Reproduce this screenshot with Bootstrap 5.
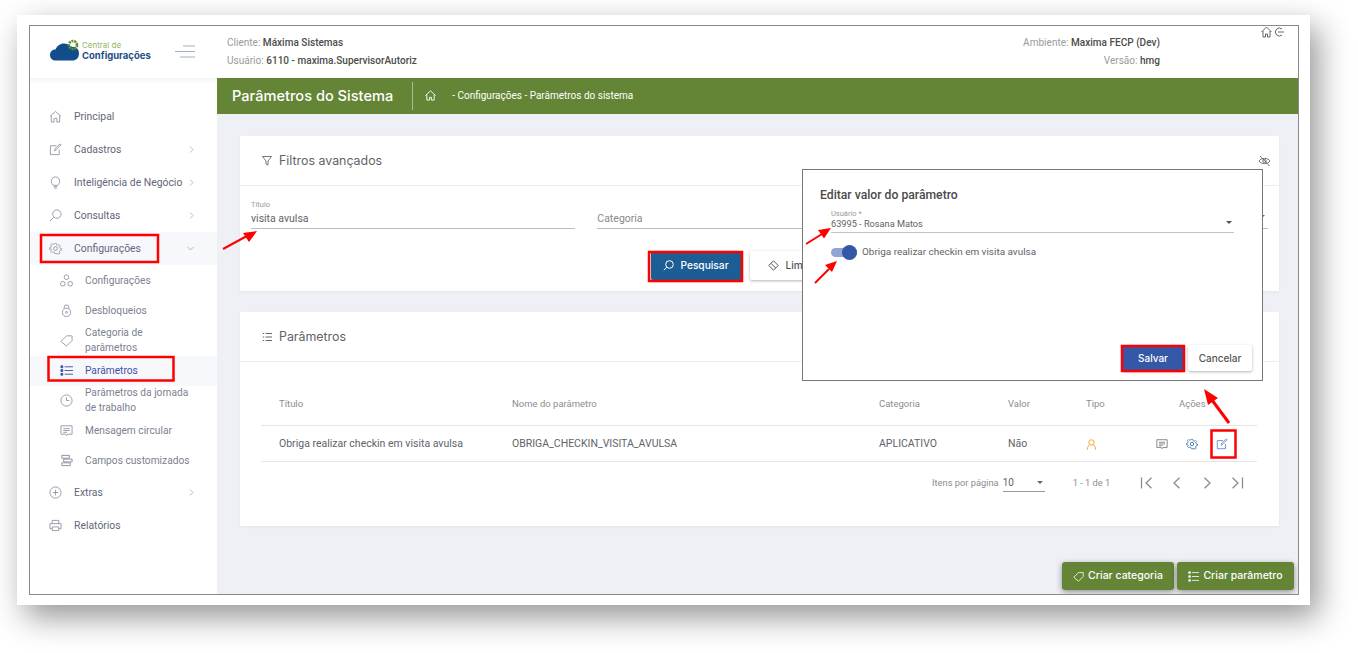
<!DOCTYPE html>
<html lang="pt-BR"><head><meta charset="utf-8"><title>Parâmetros do Sistema</title>
<link href="https://cdn.jsdelivr.net/npm/bootstrap@5.3.0/dist/css/bootstrap.min.css" rel="stylesheet">
<style>
html,body{height:653px;overflow:hidden;background:#fff}
body{font-family:"Inter","Noto Sans",sans-serif;color:#5f6368;font-size:11px}
.sheet{position:relative;width:1293px;height:590px;margin:15px 0 0 17px;padding:10px 12px;background:#fff;box-shadow:8px 12px 30px rgba(0,0,0,.42)}
.frame{position:relative;width:1270px;height:570px;border:1px solid #8a8a8a;background:#fff;overflow:hidden}
.topbar{height:52px}
.brandbox{width:187px;padding-left:20px;padding-top:12px}
.brand-a{font-size:8px;line-height:9px;color:#8fb56a;margin-top:3px}
.brand-b{font-size:9.5px;line-height:12px;font-weight:700;color:#1e4f86}
.brand-txt{margin-left:2px}
.burger{margin-left:24px;margin-top:7px}
.infobox{padding-left:10px;font-family:"Roboto",sans-serif;font-size:10.05px;line-height:18px;padding-top:8px;color:#9a9a9a}
.infobox b{color:#4c4c4c;font-weight:500}
.infoend{margin-left:auto;margin-right:138px;text-align:right;font-family:"Roboto",sans-serif;font-size:10.05px;line-height:18px;padding-top:8px;color:#9a9a9a}
.infoend b{color:#4c4c4c;font-weight:500}
.topicons{position:absolute;right:13px;top:0}
.bodyrow{height:517px}
.sidebar{width:187px;padding-top:22px;background:#fff;box-shadow:inset 0 7px 6px -5px rgba(0,0,0,.06);flex:none;font-family:"Roboto",sans-serif}
.mi{height:33px;padding-left:19px;padding-right:23px;display:flex;align-items:center;color:#63667a;font-size:10.4px}
.mi svg.ico{width:13px;height:13px;flex:none;margin-right:12px}
.mi .chev{margin-left:auto}
.mi.open{background:#f7f8fb;margin-bottom:1px}
.si{height:30px;padding-left:30px;display:flex;align-items:center;color:#7d8090;font-size:10.2px;line-height:14.5px}
.si svg.ico{width:13px;height:13px;flex:none;margin-right:12px}
.si.on{background:#f7f8fb;color:#3f51a5}
.mainarea{background:#eef0f6}
.greenbar{height:36px;background:#648535;color:#fff;padding-left:15px}
.greenbar .ttl{font-size:14.6px;font-weight:500;padding-right:19px;line-height:28px;border-right:1px solid #a8bd8a}
.greenbar .homeic{margin-left:12px}
.greenbar .crumb{font-family:"Roboto",sans-serif;font-size:10px;margin-left:16px}
.pagepad{padding:22px 19px 0 23px}
.panel{background:#fff;box-shadow:0 1px 3px rgba(0,0,0,.05)}
.panel-a{height:155px;margin-bottom:21px}
.panel-b{height:214px}
.panelhead{height:50px;border-bottom:1px solid #eeeeee;padding-left:22px;padding-top:1px;font-size:12.4px;color:#5f6368}
.hic{margin-right:7px}
.fieldrow{padding:13px 11px 0 11px;gap:22px}
.fld{flex:1 1 0;height:30px;border-bottom:1px solid #bdbdbd;position:relative;padding-top:12px;font-family:"Roboto",sans-serif;font-size:10.5px;color:#5f6368}
.fld .cap{position:absolute;left:0;top:0;font-size:7.5px;color:#9a9a9a}
.fld.ph{color:#8a8a8a}
.fld .caret{position:absolute;right:3px;top:16px}
.actions{gap:8px;margin-top:22px}
.bt{height:29px;border:0;border-radius:2px;font-size:10.2px;font-weight:500;display:inline-flex;align-items:center;justify-content:center;gap:6px;box-shadow:0 1px 3px rgba(0,0,0,.3)}
.bt-blue{width:91px;background:#1c5e93;color:#fff}
.bt-white{width:119px;background:#fff;color:#555;padding-right:6px}
.tablewrap{padding:25px 22px 0 21px}
table.ptab{table-layout:fixed;width:996px;margin:0;font-family:"Roboto",sans-serif;font-size:10.5px;color:#5f6368}
table.ptab th{height:39px;font-weight:400;font-size:9.5px;color:#8d8d8d;padding:0 0 5px 18px;vertical-align:middle;border-bottom:1px solid #e6e6e6}
table.ptab td{height:36px;padding:0 0 0 18px;vertical-align:middle;border-bottom:1px solid #e6e6e6;color:#5f6368}
.acts{gap:18px;margin-left:-23px}
.pager{height:42px;font-family:"Roboto",sans-serif;font-size:9.3px;color:#8d8d8d;padding-left:692px;position:relative}
.pagesel{width:42px;border-bottom:1px solid #9a9a9a;margin-left:4px;height:17px;color:#5f6368;font-size:10px;display:flex;justify-content:space-between;align-items:center;padding-right:2px}
.caret{width:0;height:0;border-left:3.5px solid transparent;border-right:3.5px solid transparent;border-top:3.5px solid #666}
.range{margin-left:28px;margin-right:30px}
.pgicons{gap:16px}
.fabs{position:absolute;right:4px;bottom:4px;gap:3px}
.fab{height:28px;border:0;border-radius:3px;background:#648535;color:#fff;font-size:10.5px;font-weight:500;display:inline-flex;align-items:center;justify-content:center;gap:4px;padding-top:1px;box-shadow:0 2px 6px rgba(0,0,0,.4)}
.dlg{position:absolute;left:772px;top:143px;width:461px;height:212px;background:#fff;border:1px solid #777;padding:17px 17px}
.dlgtitle{font-family:"Roboto",sans-serif;font-size:12.2px;font-weight:500;color:#4a4a4a;line-height:16px}
.dlgfld{position:relative;margin:6px 11px 0 11px;height:24px;border-bottom:1px solid #c4c4c4;font-family:"Roboto",sans-serif;font-size:9.2px;color:#5f6368;padding-top:8px}
.dlgfld .cap{position:absolute;left:0;top:-1px;font-size:7.5px;color:#9a9a9a}
.dlgfld .caret{position:absolute;right:2px;top:12px;border-top-color:#555}
.sw{margin:12px 0 0 11px;gap:5px;font-family:"Roboto",sans-serif;font-size:9.95px;color:#5f6368}
.swtrack{position:relative;width:26px;height:9px;border-radius:5px;background:#92a4d4}
.swknob{position:absolute;right:0;top:-3px;width:15px;height:15px;border-radius:50%;background:#3557a7}
.dlgbtns{position:absolute;right:10px;bottom:9px;gap:5px}
.bts{height:26px;border:0;border-radius:2px;font-size:10px;font-weight:500;display:inline-flex;align-items:center;justify-content:center;box-shadow:0 1px 3px rgba(0,0,0,.3)}
.bts-blue{width:60px;background:#3557a7;color:#fff}
.bts-white{width:64px;background:#fff;color:#555}
.marks{position:absolute;left:0;top:0;width:1358px;height:653px;pointer-events:none}
.pageoverlay{position:fixed;left:0;top:0}
</style></head><body>
<div class="sheet">
<div class="frame d-flex flex-column">
  <div class="topbar d-flex flex-none">
    <div class="brandbox d-flex align-items-start">
      <svg width="30" height="24" viewBox="0 0 30 24"><path d="M6 22.500c-3.500 0-6-2-6-5.500s2.500-5.500 5.500-5.500C7 8 10 5.500 14 5.500c3 0 5 1 6 3 4-1 9 1 9 7 0 4.500-3 7-6.500 7z" fill="#124d8b"/><circle cx="23" cy="7" r="4" fill="none" stroke="#5f8f2f" stroke-width="2.600" stroke-dasharray="2 .8"/><circle cx="23" cy="7" r="2" fill="#fff"/></svg>
      <div class="brand-txt"><div class="brand-a">Central de</div><div class="brand-b">Configurações</div></div>
      <svg class="burger" width="20" height="14" viewBox="0 0 20 14" fill="none" stroke="#9fb0c2"><path d="M8 1h12M0 6.500h20M5 12h15"/></svg>
    </div>
    <div class="infobox"><div>Cliente: <b>Máxima Sistemas</b></div><div>Usuário: <b>6110 - maxima.SupervisorAutoriz</b></div></div>
    <div class="infoend"><div>Ambiente: <b>Maxima FECP (Dev)</b></div><div>Versão: <b>hmg</b></div></div>
    <svg class="topicons" width="24" height="12" viewBox="0 0 24 12" fill="none" stroke="#555" stroke-width=".9"><path d="M.5 6 5.500 1l5 5M2 5v6h2.500V8h2v3H9V5"/><path d="M21 3a4 4 0 1 0 0 6M17 6h6"/></svg>
  </div>
  <div class="bodyrow d-flex">
    <nav class="sidebar">
      <div class="mi"><svg class="ico" viewBox="0 0 14 14" fill="none" stroke="#8a8d9c" stroke-width=".9"><path d="M1 7 7 1.500 13 7M2.500 6v7h3V9h3v4h3V6"/></svg>Principal</div>
      <div class="mi"><svg class="ico" viewBox="0 0 14 14" fill="none" stroke="#8a8d9c" stroke-width=".9"><path d="M8 3H1.500v9.500H11V7M6 8.500l.5-2.500L12 1l1 1-5.500 5.500z"/></svg>Cadastros<svg class="chev" width="5" height="7" viewBox="0 0 5 7" fill="none" stroke="#aaa" stroke-width=".8"><path d="m1 .5 3 3-3 3"/></svg></div>
      <div class="mi"><svg class="ico" viewBox="0 0 14 14" fill="none" stroke="#8a8d9c" stroke-width=".9"><path d="M4.500 10C3 8.500 2.500 7.500 2.500 5.500a4.500 4.500 0 0 1 9 0c0 2-.5 3-2 4.500zM5 11.500h4M5.500 13h3"/></svg>Inteligência de Negócio<svg class="chev" width="5" height="7" viewBox="0 0 5 7" fill="none" stroke="#aaa" stroke-width=".8"><path d="m1 .5 3 3-3 3"/></svg></div>
      <div class="mi"><svg class="ico" viewBox="0 0 14 14" fill="none" stroke="#8a8d9c" stroke-width=".9"><circle cx="8.500" cy="5.500" r="4.500"/><path d="M5 9 1 13"/></svg>Consultas<svg class="chev" width="5" height="7" viewBox="0 0 5 7" fill="none" stroke="#aaa" stroke-width=".8"><path d="m1 .5 3 3-3 3"/></svg></div>
      <div class="mi open"><svg class="ico" viewBox="0 0 14 14" fill="none" stroke="#8a8d9c" stroke-width=".9"><circle cx="7" cy="7" r="2"/><path d="M6 1h2l.4 1.700 1.500.7 1.500-.9 1.400 1.400-.9 1.500.7 1.500 1.400.1v2l-1.700.4-.7 1.500.9 1.500-1.400 1.400-1.500-.9-1.500.7L8 13H6l-.4-1.400-1.500-.7-1.500.9-1.400-1.400.9-1.500-.7-1.500L0 8V6l1.400-.4.7-1.500-.9-1.500 1.400-1.400 1.500.9 1.500-.7z" transform="translate(.7 .7) scale(.9)"/></svg>Configurações<svg class="chev" width="7" height="5" viewBox="0 0 7 5" fill="none" stroke="#aaa" stroke-width=".8"><path d="m.5 1 3 3 3-3"/></svg></div>
      <div class="si"><svg class="ico" viewBox="0 0 14 14" fill="none" stroke="#8a8d9c" stroke-width=".9"><circle cx="7" cy="3.500" r="2.500"/><circle cx="3" cy="10.500" r="2.500"/><circle cx="11" cy="10.500" r="2.500"/></svg>Configurações</div>
      <div class="si"><svg class="ico" viewBox="0 0 14 14" fill="none" stroke="#8a8d9c" stroke-width=".9"><circle cx="7" cy="9" r="4.500"/><circle cx="7" cy="9" r="1"/><path d="M4.500 5V3.500a2.500 2.500 0 0 1 5 0V5"/></svg>Desbloqueios</div>
      <div class="si"><svg class="ico" viewBox="0 0 14 14" fill="none" stroke="#8a8d9c" stroke-width=".9"><path d="M1 8 7 2h6v5l-6 6z"/></svg><span>Categoria de<br>parâmetros</span></div>
      <div class="si on"><svg class="ico" viewBox="0 0 14 14" fill="none" stroke="#3f51a5"><path d="M5 3h9M5 7h9M5 11h9"/><path d="M1 2h2v2H1zM1 6h2v2H1zM1 10h2v2H1z" fill="#3f51a5"/></svg>Parâmetros</div>
      <div class="si"><svg class="ico" viewBox="0 0 14 14" fill="none" stroke="#8a8d9c" stroke-width=".9"><circle cx="7" cy="7" r="6"/><path d="M7 3.500V7h3"/></svg><span>Parâmetros da jornada<br>de trabalho</span></div>
      <div class="si"><svg class="ico" viewBox="0 0 14 14" fill="none" stroke="#8a8d9c" stroke-width=".9"><path d="M1 2h12v9H8l-1 1.500L6 11H1zM3.500 5h7M3.500 7h7M3.500 9h4"/></svg>Mensagem circular</div>
      <div class="si"><svg class="ico" viewBox="0 0 14 14" fill="none" stroke="#8a8d9c"><path d="M2 1.500h8v3H2zM4 5.500h9v3H4zM2 9.500h9v3H2z"/></svg>Campos customizados</div>
      <div class="mi"><svg class="ico" viewBox="0 0 14 14" fill="none" stroke="#8a8d9c" stroke-width=".9"><circle cx="7" cy="7" r="6"/><path d="M7 4v6M4 7h6"/></svg>Extras<svg class="chev" width="5" height="7" viewBox="0 0 5 7" fill="none" stroke="#aaa" stroke-width=".8"><path d="m1 .5 3 3-3 3"/></svg></div>
      <div class="mi"><svg class="ico" viewBox="0 0 14 14" fill="none" stroke="#8a8d9c" stroke-width=".9"><path d="M3.500 5V1.500h7V5M3.500 10.500H1V5h12v5.500h-2.500M3.500 8.500h7v4h-7z"/></svg>Relatórios</div>
    </nav>
    <main class="mainarea flex-grow-1">
      <div class="greenbar d-flex align-items-center">
        <div class="ttl">Parâmetros do Sistema</div>
        <svg class="homeic" width="11" height="11" viewBox="0 0 12 12" fill="none" stroke="#fff"><path d="M.5 6 6 1l5.500 5M2 5v6h3V8h2v3h3V5"/></svg>
        <div class="crumb">- Configurações - Parâmetros do sistema</div>
      </div>
      <div class="pagepad">
        <section class="panel panel-a">
          <div class="panelhead d-flex align-items-center">
            <svg class="hic" width="10" height="10" viewBox="0 0 10 10" fill="none" stroke="#666" stroke-width=".9"><path d="M.5.500h9L6 5v4L4 8V5z"/></svg><span>Filtros avançados</span>
            <svg class="ms-auto me-2" width="13" height="12" viewBox="0 0 13 12" fill="none" stroke="#666" stroke-width=".9"><path d="M1 6C3 2.500 10 2.500 12 6 10 9.500 3 9.500 1 6zM2 1l9.500 10"/><circle cx="6.500" cy="6" r="1.700"/></svg>
          </div>
          <div class="fieldrow d-flex">
            <div class="fld"><span class="cap">Título</span>visita avulsa</div>
            <div class="fld ph">Categoria</div>
            <div class="fld ph">Nome do parâmetro<span class="caret"></span></div>
          </div>
          <div class="actions d-flex justify-content-center">
            <button class="bt bt-blue"><svg width="11" height="11" viewBox="0 0 11 11" fill="none" stroke="#fff"><circle cx="6.500" cy="4.500" r="3.800"/><path d="M3.800 7.200.8 10.200"/></svg>Pesquisar</button>
            <button class="bt bt-white"><svg width="11" height="11" viewBox="0 0 11 11" fill="none" stroke="#555"><path d="m.8 5.500 4.700-4.700 4.700 4.700-4.700 4.700zM3 3.300l4.700 4.700"/></svg>Limpar filtros</button>
          </div>
        </section>
        <section class="panel panel-b">
          <div class="panelhead d-flex align-items-center">
            <svg class="hic" width="10" height="10" viewBox="0 0 14 14" fill="none" stroke="#666"><path d="M5 2h9M5 7h9M5 12h9M1 2h2M1 7h2M1 12h2" stroke-width="1.500"/></svg><span>Parâmetros</span>
          </div>
          <div class="tablewrap">
            <table class="table ptab">
              <colgroup><col style="width:233px"><col style="width:367px"><col style="width:129px"><col style="width:78px"><col style="width:93px"><col></colgroup>
              <thead><tr><th>Título</th><th>Nome do parâmetro</th><th>Categoria</th><th>Valor</th><th>Tipo</th><th>Ações</th></tr></thead>
              <tbody><tr><td>Obriga realizar checkin em visita avulsa</td><td>OBRIGA_CHECKIN_VISITA_AVULSA</td><td>APLICATIVO</td><td>Não</td>
              <td><svg width="11" height="11" viewBox="0 0 11 11" fill="none" stroke="#f5a623"><circle cx="5.500" cy="3.500" r="2.700"/><path d="M1.500 10.500c0-3 1-4.200 2-4.500M9.500 10.500c0-3-1-4.200-2-4.500"/></svg></td>
              <td><div class="acts d-flex align-items-center"><svg width="12" height="12" viewBox="0 0 14 14" fill="none" stroke="#777"><path d="M1 2h12v9H8l-1 1.500L6 11H1zM3.500 5h7M3.500 7h7M3.500 9h4"/></svg><svg width="12" height="12" viewBox="0 0 14 14" fill="none" stroke="#2e6fa7"><circle cx="7" cy="7" r="2"/><path d="M6 1h2l.4 1.700 1.500.7 1.500-.9 1.400 1.400-.9 1.500.7 1.500 1.400.1v2l-1.700.4-.7 1.500.9 1.500-1.400 1.400-1.500-.9-1.500.7L8 13H6l-.4-1.400-1.500-.7-1.500.9-1.400-1.400.9-1.500-.7-1.500L0 8V6l1.400-.4.7-1.500-.9-1.500 1.400-1.400 1.500.9 1.500-.7z" transform="translate(.7 .7) scale(.9)"/></svg><svg width="12" height="12" viewBox="0 0 14 14" fill="none" stroke="#6f8fce" stroke-width="1.100"><path d="M8 3H1.500v9.500H11V7M6 8.500l.5-2.500L12 1l1 1-5.500 5.500z"/></svg></div></td></tr></tbody>
            </table>
          </div>
          <div class="pager d-flex align-items-center">
            <span>Itens por página</span>
            <div class="pagesel"><span>10</span><span class="caret"></span></div>
            <span class="range">1 - 1 de 1</span>
            <div class="pgicons d-flex align-items-center">
              <svg width="14" height="12" viewBox="0 0 14 12" fill="none" stroke="#8d8d8d" stroke-width="1.300"><path d="M1.500 .5v11M11.500 .8 6 6l5.500 5.200"/></svg>
              <svg width="14" height="12" viewBox="0 0 14 12" fill="none" stroke="#8d8d8d" stroke-width="1.300"><path d="M9.500 .8 4 6l5.500 5.200"/></svg>
              <svg width="14" height="12" viewBox="0 0 14 12" fill="none" stroke="#8d8d8d" stroke-width="1.300"><path d="M4.500 .8 10 6l-5.500 5.200"/></svg>
              <svg width="14" height="12" viewBox="0 0 14 12" fill="none" stroke="#8d8d8d" stroke-width="1.300"><path d="M12.500 .5v11M2.500 .8 8 6l-5.500 5.200"/></svg>
            </div>
          </div>
        </section>
      </div>
    </main>
  </div>
  <div class="fabs d-flex">
    <button class="fab" style="width:112px"><svg width="11" height="11" viewBox="0 0 14 14" fill="none" stroke="#fff"><path d="M1 8 7 2h6v5l-6 6z"/></svg>Criar categoria</button>
    <button class="fab" style="width:117px"><svg width="11" height="11" viewBox="0 0 14 14" fill="none" stroke="#fff"><path d="M5 2h9M5 7h9M5 12h9"/><path d="M1 1h2v2H1zM1 6h2v2H1zM1 11h2v2H1z" fill="#fff"/></svg>Criar parâmetro</button>
  </div>
  <div class="dlg" role="dialog">
    <div class="dlgtitle">Editar valor do parâmetro</div>
    <div class="dlgfld"><span class="cap">Usuário *</span>63995 - Rosana Matos<span class="caret"></span></div>
    <div class="sw d-flex align-items-center"><span class="swtrack"><span class="swknob"></span></span><span>Obriga realizar checkin em visita avulsa</span></div>
    <div class="dlgbtns d-flex"><button class="bts bts-blue">Salvar</button><button class="bts bts-white">Cancelar</button></div>
  </div>
</div>
</div>
<svg class="marks pageoverlay" viewBox="0 0 1358 653" fill="none">
  <g stroke="#f00" stroke-width="2.500">
    <rect x="41" y="235" width="117" height="27"/>
    <rect x="48.500" y="357" width="125" height="23.500"/>
    <rect x="649" y="252" width="93" height="29"/>
    <rect x="1122" y="346" width="62" height="25"/>
    <rect x="1211.500" y="430.500" width="24" height="27"/>
  </g>
  <g fill="#f00" stroke="#f00">
    <path d="M223 249 246 236.500" stroke-width="2"/><path d="M257 231 249 242 243 233z" stroke="none"/>
    <path d="M806 244 822 234" stroke-width="2"/><path d="M831 228 824 238.500 818 230z" stroke="none"/>
    <path d="M815 283 829 269" stroke-width="2"/><path d="M837 261 832 272 825 265z" stroke="none"/>
    <path d="M1229 423 1212 400" stroke-width="3"/><path d="M1204 389 1218 398 1208 405z" stroke="none"/>
  </g>
</svg>
</body></html>
